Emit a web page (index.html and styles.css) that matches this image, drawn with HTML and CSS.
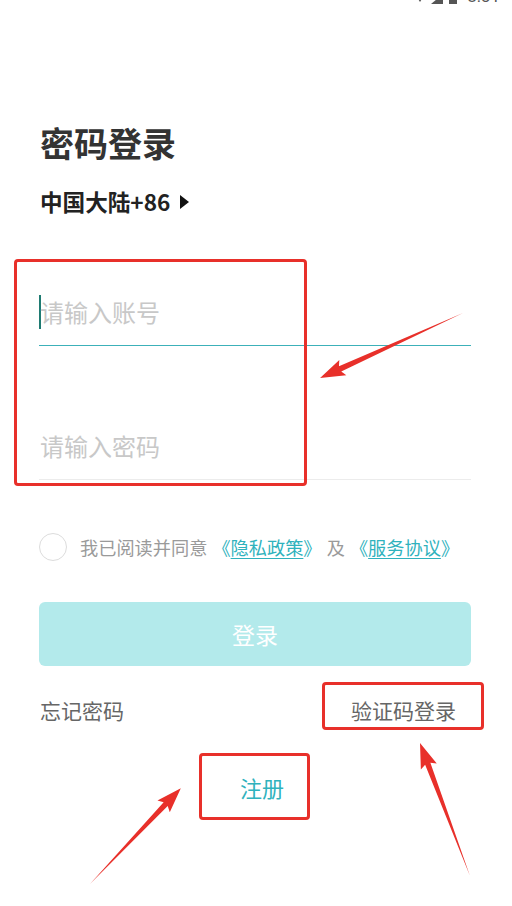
FILE: index.html
```html
<!DOCTYPE html>
<html lang="zh-CN">
<head>
<meta charset="utf-8">
<title>密码登录</title>
<link rel="stylesheet" href="styles.css">
</head>
<body>
<div class="page">
  <div class="status">
    <svg class="st-icon" width="10" height="10" viewBox="0 0 10 10"><path d="M0 0 L10 0 L5 8 Z" fill="#555"/></svg>
    <svg class="st-icon" width="12" height="10" viewBox="0 0 12 10"><path d="M12 0 L12 10 L0 10 Z" fill="#555"/></svg>
    <svg class="st-icon" width="8" height="10" viewBox="0 0 8 10"><rect x="0" y="0" width="8" height="10" fill="#555"/></svg>
    <span class="st-time">8:31</span>
  </div>

  <main class="form">
    <h1 class="title">密码登录</h1>
    <div class="region">中国大陆+86 <span class="tri"></span></div>

    <div class="field active">
      <span class="caret"></span><span class="ph">请输入账号</span>
    </div>
    <div class="field">
      <span class="ph">请输入密码</span>
    </div>

    <div class="agree">
      <span class="check"></span>
      <span class="agree-text">我已阅读并同意 <span class="link">《<u>隐私政策</u>》</span> 及 <span class="link">《<u>服务协议</u>》</span></span>
    </div>

    <div class="btn">登录</div>

    <div class="links">
      <span class="forgot">忘记密码</span>
      <span class="code">验证码登录</span>
    </div>

    <div class="register-row"><span class="register">注册</span></div>
  </main>

  <div class="mark mark-fields"></div>
  <div class="mark mark-code"></div>
  <div class="mark mark-reg"></div>

  <svg class="arrows" width="512" height="906" viewBox="0 0 512 906">
    <g fill="#e8302a">
      <polygon transform="translate(463,313) rotate(155.56)" points="0,0 135,-2.8 132,-8.5 157,0 132,8.5 135,2.8"/>
      <polygon transform="translate(90,884) rotate(-46.53)" points="0,0 110,-2.8 107,-8.5 132,0 107,8.5 110,2.8"/>
      <polygon transform="translate(470,876) rotate(-110.61)" points="0,0 120,-2.8 117,-8.5 142,0 117,8.5 120,2.8"/>
    </g>
  </svg>
</div>
</body>
</html>
```

FILE: styles.css
```css
* { box-sizing: border-box; }
html, body { margin: 0; padding: 0; background: #fff; }
body {
  font-family: "Noto Sans CJK SC", "Noto Sans", sans-serif;
  color: #333;
}
.page {
  position: relative;
  width: 512px;
  height: 906px;
  overflow: hidden;
}
.status {
  height: 24px;
  margin-top: -18px;
  display: flex;
  justify-content: flex-end;
  align-items: flex-end;
  gap: 6px;
  padding-right: 12px;
}
.st-icon { display: block; margin-bottom: 2px; }
.st-time {
  font-family: "Roboto", sans-serif;
  font-size: 17px;
  line-height: 20px;
  color: #555;
  margin-left: 4px;
}
.form {
  padding: 0 41px 0 39px;
}
.title {
  margin: 117px 0 0 1px;
  font-size: 34px;
  line-height: 40px;
  font-weight: 700;
  color: #333;
}
.region {
  margin: 25px 0 0 1px;
  font-size: 22.6px;
  line-height: 28px;
  font-weight: 700;
  color: #222;
  display: flex;
  align-items: center;
}
.tri {
  display: inline-block;
  width: 0; height: 0;
  border-top: 7px solid transparent;
  border-bottom: 7px solid transparent;
  border-left: 9px solid #111;
  margin-left: 10px;
}
.field {
  height: 67px;
  display: flex;
  align-items: center;
  border-bottom: 1px solid #ececec;
}
.field.active {
  margin-top: 63px;
  border-bottom-color: #3cb1b9;
}
.field + .field { margin-top: 67px; }
.caret {
  display: block;
  width: 2px;
  height: 34px;
  background: #1f7b72;
}
.ph {
  font-size: 24px;
  line-height: 30px;
  color: #c8c8c8;
  margin-left: 1px;
}
.active .ph { margin-left: -1px; }
.agree {
  margin-top: 53px;
  height: 28px;
  display: flex;
  align-items: center;
}
.check {
  width: 28px; height: 28px;
  border: 1.5px solid #dcdcdc;
  border-radius: 50%;
  flex: none;
}
.agree-text {
  margin-left: 13px;
  font-size: 18.2px;
  line-height: 28px;
  color: #9a9a9a;
  white-space: nowrap;
  word-spacing: 1px;
}
.link { color: #2fb2bd; }
.link u { text-decoration-thickness: 1px; text-underline-offset: 3px; }
.btn {
  margin-top: 41px;
  height: 64px;
  background: #b3eaeb;
  border-radius: 6px;
  color: #fff;
  font-size: 23px;
  display: flex;
  align-items: center;
  justify-content: center;
}
.links {
  margin-top: 29px;
  height: 30px;
  display: flex;
  justify-content: space-between;
  align-items: center;
  font-size: 21px;
  line-height: 30px;
  color: #666;
  padding: 0 15px 0 1px;
}
.register-row {
  margin-top: 47px;
  display: flex;
  justify-content: center;
  padding-left: 14px;
}
.register {
  font-size: 22px;
  line-height: 30px;
  color: #2fb2bd;
}
.mark {
  position: absolute;
  border: 3px solid #e8302a;
  border-radius: 4px;
  pointer-events: none;
}
.mark-fields { left: 14px; top: 259px; width: 293px; height: 227px; }
.mark-code { left: 322px; top: 682px; width: 162px; height: 48px; }
.mark-reg { left: 199px; top: 753px; width: 111px; height: 67px; }
.arrows {
  position: absolute;
  left: 0; top: 0;
  pointer-events: none;
}
```
